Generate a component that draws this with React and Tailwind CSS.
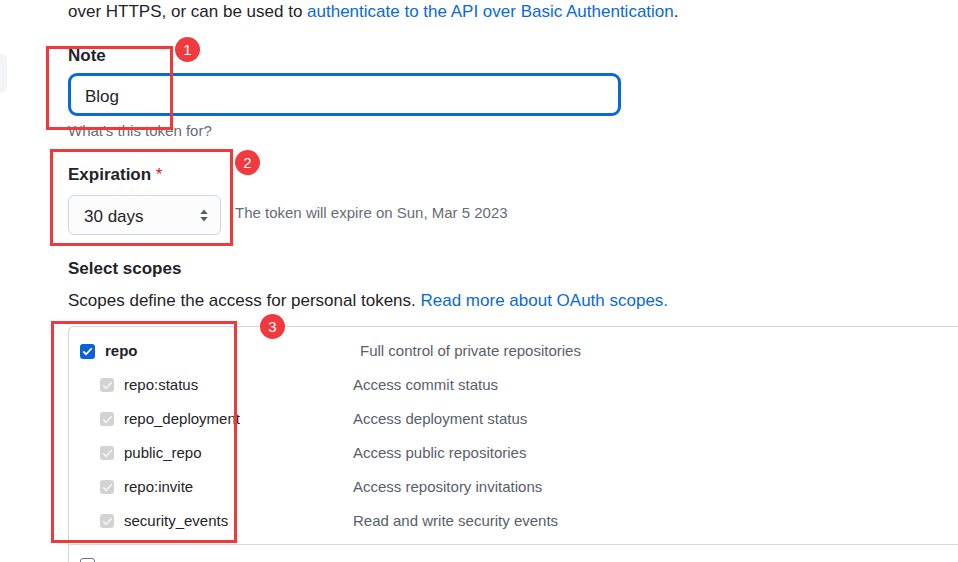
import React from "react";

// scopes shown under the "repo" group
const repoScopes = [
  { name: "repo:status", desc: "Access commit status" },
  { name: "repo_deployment", desc: "Access deployment status" },
  { name: "public_repo", desc: "Access public repositories" },
  { name: "repo:invite", desc: "Access repository invitations" },
  { name: "security_events", desc: "Read and write security events" },
];

function CheckIcon({ color }) {
  return (
    <svg viewBox="0 0 16 16" className="w-[11px] h-[11px]" fill="none">
      <path d="M2.5 8.5l3.5 3.5 7.5-8" stroke={color} strokeWidth="2.6" strokeLinecap="round" strokeLinejoin="round" />
    </svg>
  );
}

function Badge({ n }) {
  return (
    <div className="absolute w-[25px] h-[25px] rounded-full bg-[#f13a3e] text-white text-[15px] flex items-center justify-center leading-none">
      {n}
    </div>
  );
}

export default function App() {
  return (
    <div
      className="relative w-[958px] h-[562px] overflow-hidden bg-white text-[#1f2328]"
      style={{ fontFamily: '"Liberation Sans", Arial, sans-serif' }}
    >
      {/* sidebar remnant */}
      <div className="absolute left-[-10px] top-[54px] w-[17px] h-[39px] rounded-md bg-[#f3f4f6]" />

      <div className="pl-[68px]">
        <p className="text-[17px] leading-[24px] whitespace-nowrap">
          over HTTPS, or can be used to{" "}
          <span className="text-[#0969da]">authenticate to the API over Basic Authentication</span>.
        </p>

        {/* Note */}
        <div className="mt-[20px] text-[17px] leading-[24px] font-bold">Note</div>
        <div className="mt-[5px] w-[553px] h-[43px] rounded-[9px] border-[3px] border-[#0969da] flex items-center pl-[14px] pt-[4px] text-[17px]">
          Blog
        </div>
        <div className="mt-[5px] text-[15px] leading-[20px] text-[#656d76]">What's this token for?</div>

        {/* Expiration */}
        <div className="mt-[22px] text-[17px] leading-[24px] font-bold">
          Expiration <span className="text-[#cf222e] font-normal">*</span>
        </div>
        <div className="mt-[8px] flex items-center">
          <div className="w-[153px] h-[40px] rounded-[6px] border border-[#d0d7de] bg-[#fcfcfd] flex items-center justify-between pl-[15px] pr-[11px] text-[17px]">
            <span className="pt-[3px]">30 days</span>
            <svg viewBox="0 0 10 16" className="w-[10px] h-[15px]" fill="#57606a">
              <path d="M5 1.5L9 6.5H1z" />
              <path d="M5 14.5L1 9.5H9z" />
            </svg>
          </div>
          <span className="ml-[14px] -mt-[3px] text-[15px] text-[#656d76]">The token will expire on Sun, Mar 5 2023</span>
        </div>

        {/* Scopes */}
        <div className="mt-[22px] text-[17px] leading-[24px] font-bold">Select scopes</div>
        <p className="mt-[8px] text-[17px] leading-[24px] whitespace-nowrap">
          Scopes define the access for personal tokens.{" "}
          <span className="text-[#0969da]">Read more about OAuth scopes.</span>
        </p>

        <div className="mt-[13px] border-t border-l border-[#d0d7de] rounded-tl-[6px]">
          <div className="pt-[8px] pb-[6px] border-b border-[#d0d7de]">
            <div className="h-[33px] flex items-center pl-[11px] text-[15px]">
              <div className="w-[15px] h-[15px] rounded-[3px] bg-[#0b62d6] flex items-center justify-center">
                <CheckIcon color="#ffffff" />
              </div>
              <span className="ml-[10px] w-[255px] font-semibold">repo</span>
              <span className="text-[#57606a]">Full control of private repositories</span>
            </div>
            {repoScopes.map((s) => (
              <div key={s.name} className="h-[34px] flex items-center pl-[31px] text-[15px]">
                <div className="w-[14px] h-[14px] rounded-[3px] bg-[#d3d3d3] flex items-center justify-center">
                  <CheckIcon color="#f2f2f2" />
                </div>
                <span className="ml-[10px] w-[229px]">{s.name}</span>
                <span className="text-[#57606a]">{s.desc}</span>
              </div>
            ))}
          </div>
          <div className="pt-[12px] h-[40px] flex items-start pl-[11px] text-[15px]">
            <div className="mt-[1px] w-[15px] h-[15px] rounded-[3px] border border-[#6e7781] bg-white" />
            <span className="ml-[10px] w-[249px] font-semibold">workflow</span>
            <span className="text-[#57606a]">Update GitHub Action workflows</span>
          </div>
        </div>
      </div>

      {/* annotations */}
      <div className="absolute left-[46px] top-[46px] w-[127px] h-[84px] border-[3px] border-[#f03a3a]" />
      <div className="absolute left-[175px] top-[37px]"><Badge n="1" /></div>
      <div className="absolute left-[50px] top-[149px] w-[183px] h-[97px] border-[3px] border-[#f03a3a]" />
      <div className="absolute left-[235px] top-[150px]"><Badge n="2" /></div>
      <div className="absolute left-[51px] top-[321px] w-[186px] h-[222px] border-[3px] border-[#f03a3a]" />
      <div className="absolute left-[260px] top-[314px]"><Badge n="3" /></div>
    </div>
  );
}
